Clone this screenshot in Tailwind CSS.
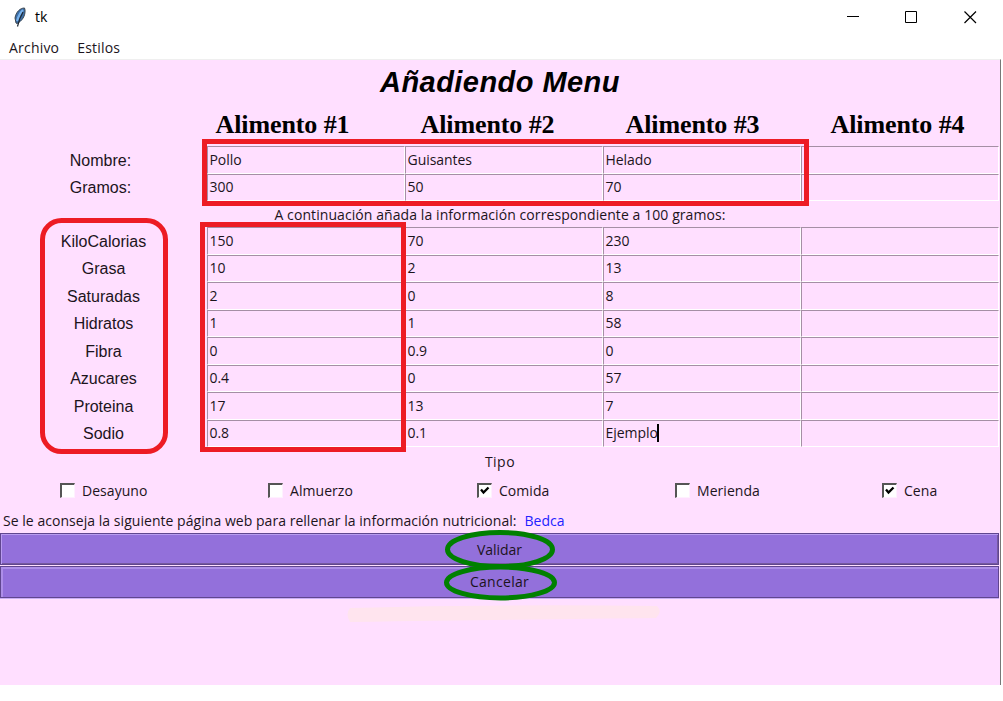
<!DOCTYPE html>
<html lang="es">
<head>
<meta charset="utf-8">
<title>tk</title>
<script src="https://cdn.jsdelivr.net/npm/@tailwindcss/browser@4"></script>
</head>
<body class="bg-white">
<div class="relative flex h-[701px] w-[1003px] flex-col overflow-hidden bg-white font-['Open_Sans',sans-serif] text-[14px] leading-5 tracking-[-0.05px] text-[#1c141c]">
  <header class="flex h-[34px] shrink-0 items-center pl-[12px] text-black">
    <svg class="h-[22px] w-[15px]" viewBox="0 0 15 22"><path d="M12.500 2C8 2 4 6 3 12l1 5 1 .5C10 15 13.500 10 13 4z" fill="#3c6ea8" stroke="#3b4650" stroke-width="1"/><path d="M11 4C8 7 6 11 5 15" stroke="#79b3ed" stroke-width="2" fill="none"/><path d="M11 6C8 11 7 14 5.500 20.500" stroke="#1d2630" stroke-width="1.200" fill="none"/></svg>
    <span class="ml-[8px]">tk</span>
    <svg class="ml-auto mr-[26px] h-[14px] w-[130px]" viewBox="0 0 130 14" fill="none" stroke="#000" stroke-width="1"><path d="M0 6.500h12M58.500 1.500h11v11h-11z"/><path d="M117.500 1.500l11.500 11.500M129 1.500L117.500 13" stroke-width="1.200"/></svg>
  </header>
  <nav class="flex h-[25px] shrink-0 items-center gap-[18px] pl-[9px] pt-[3px] tracking-[0.2px]"><span>Archivo</span><span>Estilos</span></nav>
  <main class="flex h-[626px] w-[1001px] shrink-0 flex-col border-r border-t border-r-[#777] border-t-[#efefef] bg-[#ffdfff]">
    <h1 class="h-[47px] pt-[4px] text-center font-['Liberation_Sans',sans-serif] text-[29px] font-bold italic leading-[36px] tracking-[0.45px] text-black">Añadiendo Menu</h1>
    <div class="grid h-[39px] grid-cols-4 pl-[180px] pt-[4px] text-center font-['Liberation_Serif',serif] text-[26px] font-bold leading-[28px] tracking-[-0.1px] text-black"><span>Alimento #1</span><span>Alimento #2</span><span>Alimento #3</span><span>Alimento #4</span></div>
    <div id="top" class="flex h-[55px] flex-col [&_.label]:-translate-x-[3px]"></div>
    <p class="h-[26px] pt-[4px] text-center tracking-[0.08px]"><span>A continuación añada la información correspondiente a 100 gramos:</span></p>
    <div id="rows" class="flex h-[220px] flex-col"></div>
    <div class="flex h-[29px] items-center justify-center tracking-[0.5px]"><span>Tipo</span></div>
    <div id="checks" class="flex h-[30px] items-center pl-[60px] tracking-[0.05px]"></div>
    <p class="flex h-[27px] items-center gap-[8px] pl-[3px] pt-[3px] tracking-[0.04px]"><span>Se le aconseja la siguiente página web para rellenar la información nutricional:</span><a class="text-[#2222ff]">Bedca</a></p>
    <button class="flex h-[32px] w-[999px] shrink-0 items-center justify-center border border-[#60468f] bg-[#9370db] pt-px shadow-[inset_1px_1px_0_#b99cf0,inset_-1px_-1px_0_#76599f]">Validar</button>
    <button class="mt-[1px] flex h-[32px] w-[999px] shrink-0 items-center justify-center border border-[#60468f] bg-[#9370db] tracking-[0.3px] shadow-[inset_2px_2px_0_#ad8ee8,0_1px_0_#c9aef5]">Cancelar</button>
  </main>
  <svg class="pointer-events-none absolute left-0 top-0" width="1003" height="701" viewBox="0 0 1003 701" fill="none" stroke-width="5">
    <path d="M350 608Q500 604 657 606Q663 611 656 618Q560 619 350 622Q345 614 350 608z" fill="#ffe4ee"/>
    <g stroke="#ed1c24"><path d="M204.500 141.500h602v62h-602zM202.500 224.500h201v225h-201z"/><rect x="42.500" y="220.500" width="123" height="231" rx="19"/></g>
    <g stroke="#008000"><ellipse cx="500" cy="549.500" rx="52.500" ry="17"/><ellipse cx="500.500" cy="582.500" rx="54" ry="15.500"/></g>
  </svg>
</div>
<script>
const row = ([name, ...values]) => `<div class="flex h-[27.5px] shrink-0"><div class="flex w-[207px] items-center justify-center font-['Liberation_Sans',sans-serif] text-[16px] tracking-[0px]"><span class="label translate-y-[1px]">${name}</span></div>${values.map(v => `<div class="flex w-[198px] items-center border-b border-l border-r border-t border-b-white border-l-[#a58fa5] border-r-white border-t-[#a58fa5] pl-[1.5px]"><span>${v}</span>${v === 'Ejemplo' ? '<i class="-ml-px h-[18px] w-[2px] bg-black"></i>' : ''}</div>`).join('')}</div>`;
document.getElementById('top').innerHTML = [['Nombre:','Pollo','Guisantes','Helado',''],['Gramos:','300','50','70','']].map(row).join('');
document.getElementById('rows').innerHTML = [
 ['KiloCalorias','150','70','230',''],['Grasa','10','2','13',''],['Saturadas','2','0','8',''],['Hidratos','1','1','58',''],
 ['Fibra','0','0.9','0',''],['Azucares','0.4','0','57',''],['Proteina','17','13','7',''],['Sodio','0.8','0.1','Ejemplo','']
].map(row).join('');
document.getElementById('checks').innerHTML = [['Desayuno',208,0],['Almuerzo',209,0],['Comida',198,1],['Merienda',207,0],['Cena',100,1]].map(([t,w,c]) =>
 `<div class="flex shrink-0 items-center gap-[7px]" style="width:${w}px"><div class="h-[15px] w-[15px] -translate-y-px border-b border-l-2 border-r border-t-2 border-b-[#fff0ff] border-l-[#555] border-r-[#fff0ff] border-t-[#555] bg-white">${c ? '<svg width="12" height="12" viewBox="0 0 12 12"><path d="M2 4.500L4.500 7.500L9.500 2.500" fill="none" stroke="#000" stroke-width="2.300"/></svg>' : ''}</div><span>${t}</span></div>`).join('');
</script>
</body>
</html>
